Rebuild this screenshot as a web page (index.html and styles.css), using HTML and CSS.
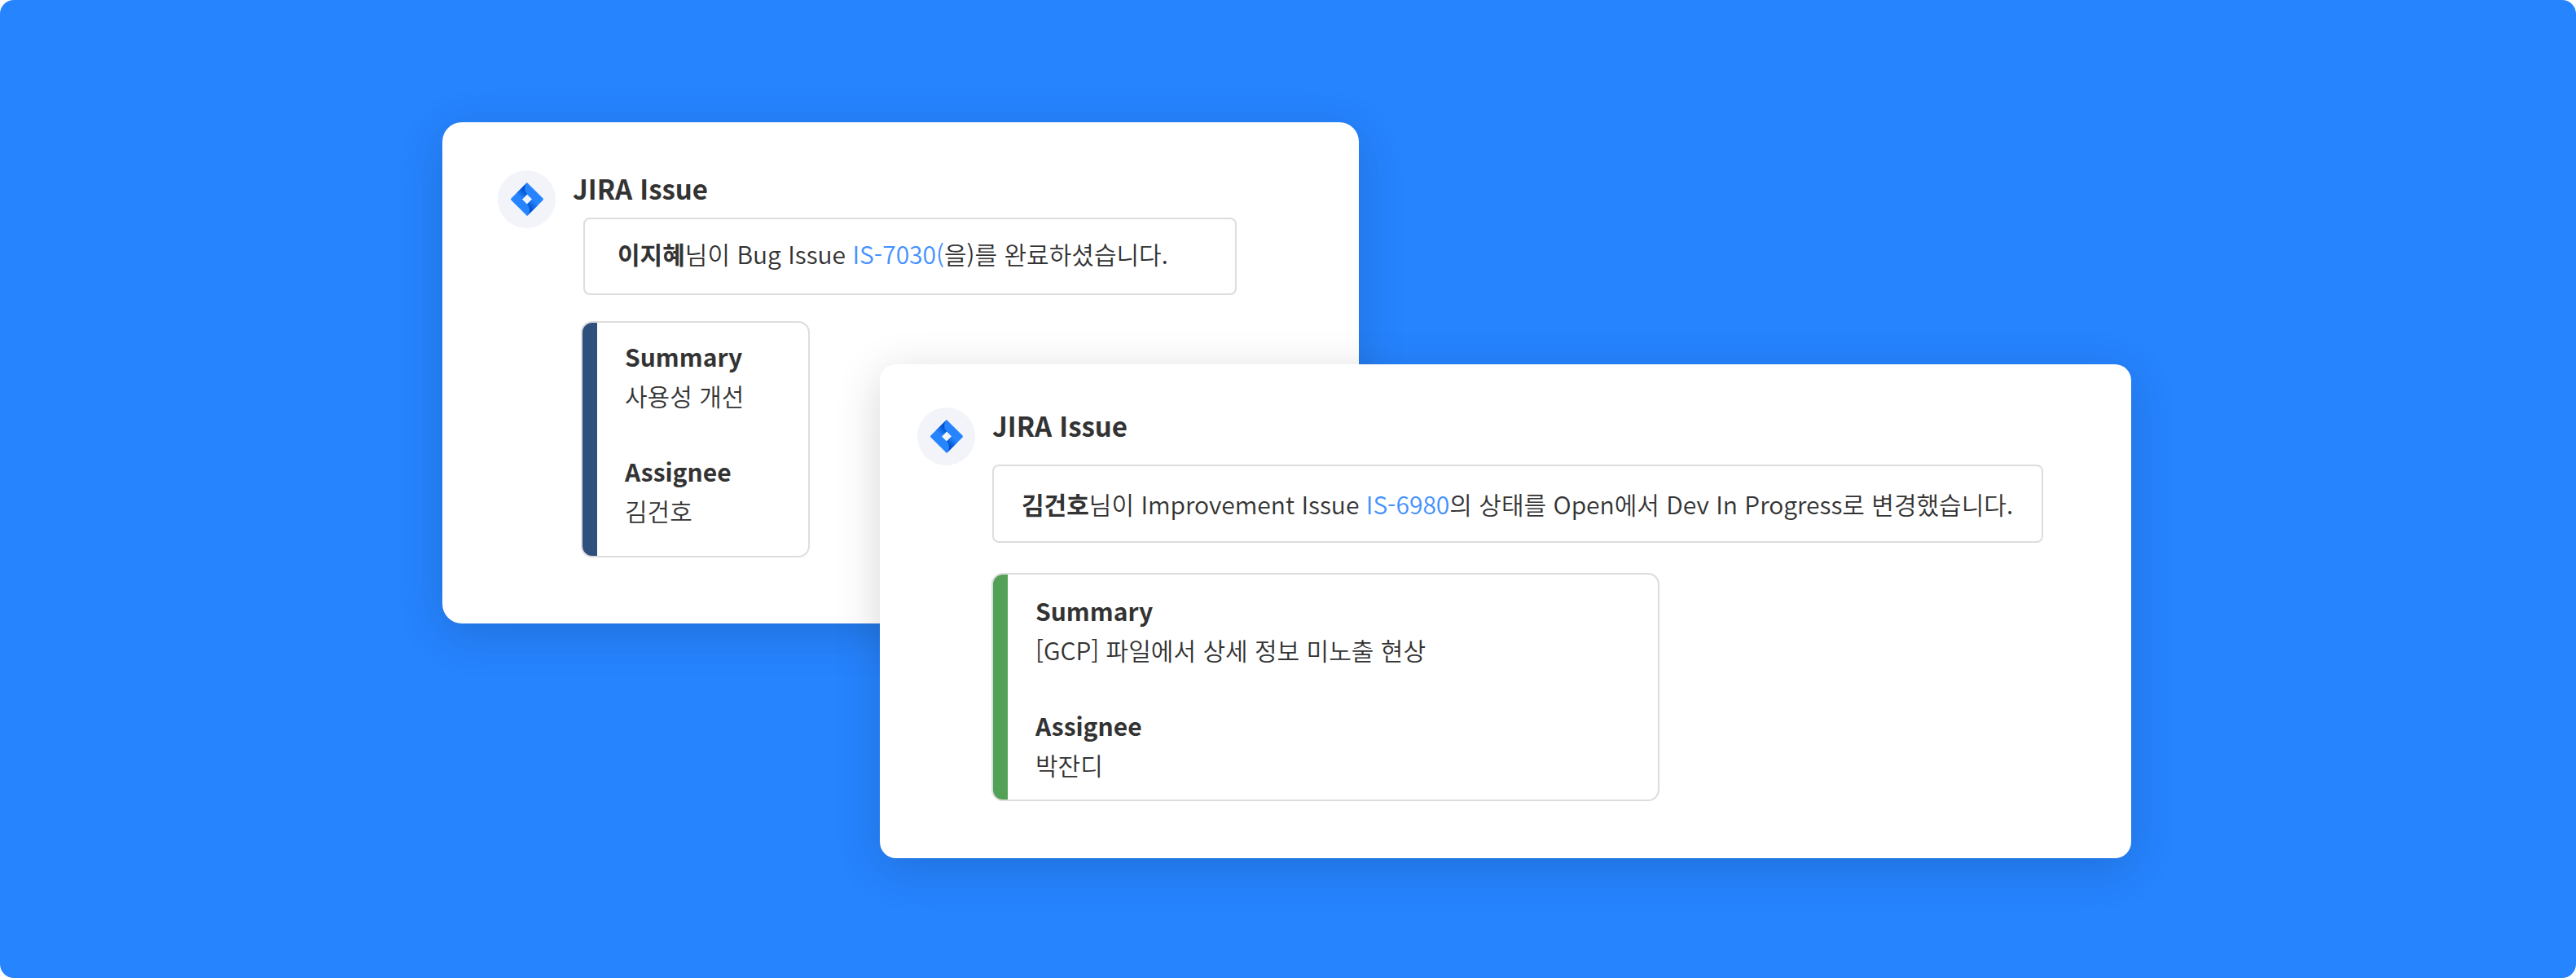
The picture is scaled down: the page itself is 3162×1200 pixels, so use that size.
FILE: index.html
```html
<!DOCTYPE html>
<html lang="ko">
<head>
<meta charset="utf-8">
<title>JIRA Issue</title>
<meta name="viewport" content="width=device-width, initial-scale=1">
<link rel="stylesheet" href="styles.css">
</head>
<body>
<svg class="defs" aria-hidden="true">
  <defs>
    <linearGradient id="fold-top" gradientUnits="userSpaceOnUse" x1="34.64" y1="15.35" x2="19" y2="30.99">
      <stop offset=".18" stop-color="#0052cc"/><stop offset="1" stop-color="#2684ff"/>
    </linearGradient>
    <linearGradient id="fold-bottom" gradientUnits="userSpaceOnUse" x1="38.78" y1="60.28" x2="54.39" y2="44.67">
      <stop offset=".18" stop-color="#0052cc"/><stop offset="1" stop-color="#2684ff"/>
    </linearGradient>
    <symbol id="jira" viewBox="0 0 73.3 75.76">
      <path fill="#2684ff" d="M72.4 35.76 39.8 3.16 36.64 0 12.1 24.54.88 35.76a3 3 0 0 0 0 4.24L23.3 62.4l13.34 13.36 24.54-24.54.38-.38L72.4 40a3 3 0 0 0 0-4.24zM36.64 49.08l-11.2-11.2 11.2-11.2 11.2 11.2z"/>
      <path fill="url(#fold-top)" d="M36.64 26.68A18.86 18.86 0 0 1 36.56.09L12.05 24.59l13.34 13.34z"/>
      <path fill="url(#fold-bottom)" d="M47.87 37.85 36.64 49.08a18.86 18.86 0 0 1 0 26.68l24.57-24.57z"/>
    </symbol>
  </defs>
</svg>
<main class="scene">
  <article class="card card-done">
    <div class="avatar"><svg class="logo" aria-hidden="true"><use href="#jira"/></svg></div>
    <div class="body">
      <h2 class="title">JIRA Issue</h2>
      <p class="message"><strong>이지혜</strong>님이 Bug Issue <a href="#IS-7030">IS-7030(</a>을)를 완료하셨습니다.</p>
      <dl class="fields">
        <div class="field"><dt>Summary</dt><dd>사용성 개선</dd></div>
        <div class="field"><dt>Assignee</dt><dd>김건호</dd></div>
      </dl>
    </div>
  </article>
  <article class="card card-progress">
    <div class="avatar"><svg class="logo" aria-hidden="true"><use href="#jira"/></svg></div>
    <div class="body">
      <h2 class="title">JIRA Issue</h2>
      <p class="message"><strong>김건호</strong>님이 Improvement Issue <a href="#IS-6980">IS-6980</a>의 상태를 Open에서 Dev In Progress로 변경했습니다.</p>
      <dl class="fields">
        <div class="field"><dt>Summary</dt><dd>[GCP] 파일에서 상세 정보 미노출 현상</dd></div>
        <div class="field"><dt>Assignee</dt><dd>박잔디</dd></div>
      </dl>
    </div>
  </article>
</main>
</body>
</html>
```
FILE: styles.css
```css
* {
  box-sizing: border-box;
}

body {
  margin: 0;
  background: #fff;
  color: #333;
  font: 350 30px/48px "Noto Sans CJK KR", sans-serif;
}

.defs {
  position: absolute;
  width: 0;
  height: 0;
}

/* Two cards share one grid row and overlap in the third column. */
.scene {
  display: grid;
  grid-template-columns:
    minmax(0, 543fr) minmax(0, 537fr) minmax(0, 588fr)
    minmax(0, 948fr) minmax(0, 546fr);
  align-items: start;
  min-height: 100vh;
  padding: 150px 0 147px;
  border-radius: 17px;
  background: #2684ff;
}

.card {
  display: flex;
  align-items: flex-start;
  grid-row: 1;
  background: #fff;
  box-shadow: 0 12px 56px rgba(0, 0, 0, 0.16);
}

.card-done {
  grid-column: 2 / 4;
  gap: 21px;
  padding: 57px 68px 81px;
  border-radius: 24px;
}

.card-progress {
  grid-column: 3 / 5;
  gap: 21px;
  margin-top: 297px;
  padding: 51px 46px 70px;
  border-radius: 20px;
}

.avatar {
  display: flex;
  flex: none;
  align-items: center;
  justify-content: center;
  width: 71px;
  height: 71px;
  margin-top: 2px;
  border-radius: 50%;
  background: #f2f4f9;
}

.logo {
  width: 40px;
  height: 41px;
}

.body {
  flex: 1;
  min-width: 0;
}

.title {
  margin: 0;
  font-size: 33px;
  font-weight: 700;
}

.message {
  width: 100%;
  margin: 0;
  border: 2px solid #ddd;
  border-radius: 8px;
}

.message strong {
  font-weight: 700;
}

.message a {
  color: #4391ff;
  text-decoration: none;
}

.fields {
  display: grid;
  gap: 45px;
  margin: 0;
  border: 2px solid #ddd;
  border-radius: 14px;
  background: linear-gradient(var(--accent), var(--accent)) left / 18px 100% no-repeat;
}

.field dt {
  font-weight: 700;
}

.field dd {
  margin: 0;
}

.card-done .message {
  max-width: 802px;
  margin: 12px 0 32px 13px;
  padding: 18px 40px 25px;
}

.card-done .fields {
  --accent: #2f507d;
  max-width: 281px;
  margin-left: 10px;
  padding: 17px 52px 32px;
}

.card-progress .message {
  max-width: 1290px;
  margin: 24px 0 37px;
  padding: 22px 34px;
}

.card-progress .fields {
  --accent: #52a156;
  max-width: 820px;
  margin-left: -1px;
  padding: 20px 52px 19px;
}
```
